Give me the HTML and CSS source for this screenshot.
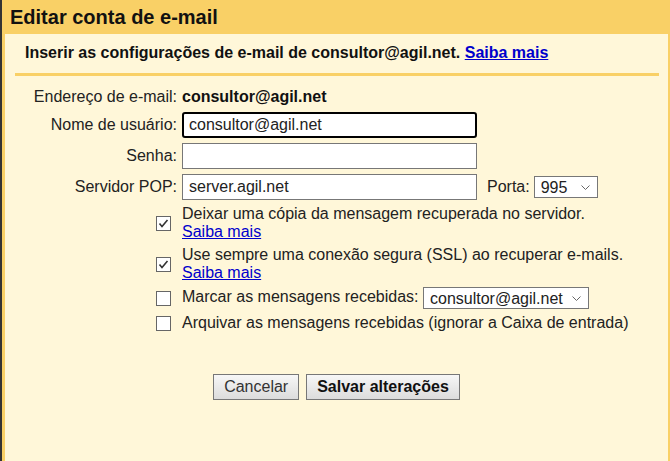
FILE: index.html
```html
<!DOCTYPE html>
<html lang="pt">
<head>
    <meta charset="UTF-8">
    <title>Editar conta de e-mail</title>
    <link rel="stylesheet" href="styles.css">
</head>
<body>
    <div class="dialog">
        <div class="dialog-header">Editar conta de e-mail</div>

        <div class="dialog-body">
            <div class="intro">
                Inserir as configurações de e-mail de consultor@agil.net.
                <a href="#">Saiba mais</a>
            </div>

            <form class="account-form">
                <div class="field-label">Endereço de e-mail:</div>
                <div class="field-value"><b>consultor@agil.net</b></div>

                <label class="field-label" for="username">Nome de usuário:</label>
                <div class="field-value">
                    <input type="text" id="username" class="text-input is-focused" value="consultor@agil.net">
                </div>

                <label class="field-label" for="password">Senha:</label>
                <div class="field-value">
                    <input type="password" id="password" class="text-input">
                </div>

                <label class="field-label" for="server">Servidor POP:</label>
                <div class="field-value">
                    <input type="text" id="server" class="text-input" value="server.agil.net">
                    <label class="port-label" for="port">Porta:</label>
                    <span class="select-wrap port-select">
                        <select id="port">
                            <option>995</option>
                            <option>110</option>
                        </select>
                        <svg class="chevron" width="9" height="5" viewBox="0 0 9 5"><polyline points="0.5,0.5 4.5,4.5 8.5,0.5" fill="none" stroke="#666" stroke-width="1"/></svg>
                    </span>
                </div>

                <span class="check-box is-checked">
                    <svg width="13" height="13" viewBox="0 0 13 13"><polyline points="2.5,6.5 5,9.5 10.5,3" fill="none" stroke="#333" stroke-width="1.6"/></svg>
                </span>
                <div class="check-text">
                    Deixar uma cópia da mensagem recuperada no servidor.<br>
                    <a href="#">Saiba mais</a>
                </div>

                <span class="check-box is-checked">
                    <svg width="13" height="13" viewBox="0 0 13 13"><polyline points="2.5,6.5 5,9.5 10.5,3" fill="none" stroke="#333" stroke-width="1.6"/></svg>
                </span>
                <div class="check-text">
                    Use sempre uma conexão segura (SSL) ao recuperar e-mails.<br>
                    <a href="#">Saiba mais</a>
                </div>

                <span class="check-box"></span>
                <div class="check-text">
                    Marcar as mensagens recebidas:
                    <span class="select-wrap label-select">
                        <select>
                            <option>consultor@agil.net</option>
                        </select>
                        <svg class="chevron" width="9" height="5" viewBox="0 0 9 5"><polyline points="0.5,0.5 4.5,4.5 8.5,0.5" fill="none" stroke="#666" stroke-width="1"/></svg>
                    </span>
                </div>

                <span class="check-box"></span>
                <div class="check-text">
                    Arquivar as mensagens recebidas (ignorar a Caixa de entrada)
                </div>
            </form>

            <div class="actions">
                <button type="button" class="btn">Cancelar</button>
                <button type="button" class="btn btn-primary">Salvar alterações</button>
            </div>
        </div>
    </div>
</body>
</html>
```

FILE: styles.css
```css
body {
    margin: 0;
    font-family: "Liberation Sans", Arial, sans-serif;
    font-size: 16px;
    color: #222;
    background-color: #fff7d9;
}

.dialog {
    height: 461px;
    border-left: 2px solid #333;
    display: flex;
    flex-direction: column;
    box-sizing: border-box;
}

.dialog-header {
    height: 34px;
    padding-left: 8px;
    line-height: 35px;
    font-size: 20px;
    font-weight: bold;
    color: #111;
    background-color: #f9d066;
}

.dialog-body {
    flex: 1;
    border-left: 3px solid #f9d066;
    border-right: 2px solid #f9d066;
    background-color: #fff7d9;
}

.intro {
    margin: 0 9px 0 10px;
    padding: 10px 0 11px 10px;
    line-height: 18px;
    font-size: 16px;
    font-weight: bold;
    color: #111;
    border-bottom: 3px solid #f9d066;
}

a {
    color: #00c;
    text-decoration: underline;
}

.account-form {
    display: grid;
    grid-template-columns: 172px 1fr;
    column-gap: 5px;
    row-gap: 5px;
    margin-top: 11px;
    line-height: 18px;
}

.field-label {
    display: flex;
    align-items: center;
    justify-content: flex-end;
    color: #222;
}

.field-value {
    display: flex;
    align-items: center;
    min-height: 20px;
}

.field-value b {
    color: #111;
}

.text-input {
    width: 295px;
    height: 26px;
    padding: 0 6px;
    border: 1px solid #777;
    border-radius: 0;
    background: white;
    font-family: inherit;
    font-size: 16px;
    color: #222;
    box-sizing: border-box;
}

.text-input.is-focused {
    border: 2px solid #000;
    border-radius: 3px;
    padding-left: 5px;
}

.text-input:focus {
    outline: none;
}

.port-label {
    margin: 0 4px 0 10px;
}

.select-wrap {
    position: relative;
    display: inline-block;
    vertical-align: middle;
}

.select-wrap select {
    -webkit-appearance: none;
    appearance: none;
    height: 22px;
    padding: 0 24px 0 6px;
    border: 1px solid #777;
    border-radius: 0;
    background: white;
    font-family: inherit;
    font-size: 16px;
    color: #222;
    box-sizing: border-box;
}

.port-select select {
    width: 64px;
}

.label-select select {
    width: 166px;
}

.chevron {
    position: absolute;
    right: 8px;
    top: 9px;
    pointer-events: none;
}

.check-box {
    justify-self: end;
    align-self: center;
    margin-right: 6px;
    width: 15px;
    height: 15px;
    border: 1px solid #666;
    background: white;
    box-sizing: border-box;
    display: flex;
    align-items: center;
    justify-content: center;
}

.check-text {
    color: #222;
}

.actions {
    display: flex;
    justify-content: center;
    gap: 7px;
    margin-top: 42px;
}

.btn {
    height: 26px;
    padding: 0 10px;
    border: 1px solid #777;
    border-radius: 0;
    background: linear-gradient(#f7f7f7, #dcdcdc);
    font-family: inherit;
    font-size: 16px;
    color: #333;
    cursor: pointer;
}

.btn-primary {
    font-weight: bold;
    color: #111;
}
```
